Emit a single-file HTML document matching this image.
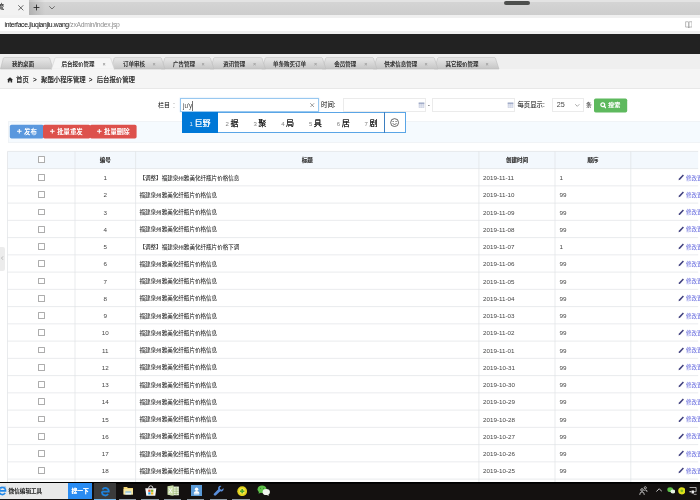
<!DOCTYPE html>
<html lang="zh-CN">
<head>
<meta charset="utf-8">
<title>后台报价管理</title>
<style>
html,body{margin:0;padding:0;background:#fff;}
body{width:700px;height:500px;overflow:hidden;}
#app{position:relative;width:700px;height:500px;overflow:hidden;background:#fff;font-family:"Liberation Sans","Noto Sans CJK SC",sans-serif;color:#333;font-size:5.47px;}
#app *{box-sizing:border-box;}
#layer{position:absolute;left:0;top:0;width:700px;height:500px;will-change:transform;text-shadow:0 0 0.5px;}
.abs{position:absolute;}
.t{position:absolute;white-space:nowrap;line-height:10px;height:10px;}
/* browser chrome */
.bstrip{left:0;top:0;width:700px;height:14.8px;background:linear-gradient(#e3e3e3 0,#e3e3e3 1.6px,#d4d4d4 2.4px,#cdcdcd 100%);}
.btab{left:0;top:0;width:28.6px;height:15px;background:#f2f2f2;}
.btool{left:0;top:14.8px;width:700px;height:19px;background:#f0f0f0;}
.baddr{left:0;top:17.6px;width:700px;height:13.6px;background:#fff;}
.pill{left:504px;top:1.2px;width:26.4px;height:3.9px;border-radius:2px;background:#4d4f4d;}
.black{left:0;top:33.7px;width:700px;height:20.4px;background:#222;}
/* app tabs */
.tabbar{left:0;top:54.1px;width:700px;height:16px;background:#efefef;}
.crumb{left:0;top:69.4px;width:700px;height:19.2px;background:#f5f5f5;border-bottom:1px solid #e8e8e8;}
.tabt{font-size:5.5px;color:#333;top:59px;}
.tabx{font-size:5.4px;color:#a4a4a4;top:59px;}
.cr{font-size:6.38px;color:#333;top:75px;}
/* form */
.lbl{font-size:6.38px;color:#333;top:100.2px;text-shadow:0 0 0.5px rgba(51,51,51,.4);}
.inp{position:absolute;top:98.3px;height:14px;border:1px solid #ebebeb;background:#fff;}
.inp.focus{border-color:#98c8f0;box-shadow:0 0 1.5px rgba(59,150,230,.32);}
.band{left:7.5px;top:121px;width:693px;height:21.6px;background:#f5fafe;border:1px solid #f0f3f6;border-right:0;}
.btn{position:absolute;top:124.7px;height:13.8px;border-radius:1.8px;color:#fff;font-size:6.38px;line-height:13.8px;white-space:nowrap;}
/* table */
.tr{position:absolute;left:0;width:700px;}
.tr.th{font-weight:bold;}
.c{position:absolute;top:0.3px;height:100%;display:flex;align-items:center;white-space:nowrap;font-size:5.56px;color:#333;overflow:hidden;}
.c1{left:7.5px;width:67.5px;justify-content:center;}
.c2{left:75px;width:60.6px;justify-content:center;font-size:6.25px;color:#444;text-shadow:none;}
.c3{left:135.6px;width:343.3px;padding-left:3.9px;text-shadow:0 0 0.5px rgba(51,51,51,.4);}
.c4{left:478.9px;width:76.1px;padding-left:4.1px;font-size:6.25px;color:#444;text-shadow:none;}
.c5{left:555px;width:75.8px;padding-left:4.5px;font-size:6.25px;color:#444;text-shadow:none;}
.c6{left:630.8px;width:80px;padding-left:47.4px;overflow:visible;color:#787ce2;text-shadow:0 0 0.5px rgba(120,124,226,.4);}
.th .c2,.th .c3,.th .c4,.th .c5{justify-content:center;padding-left:0;font-size:5.5px;color:#333;text-shadow:0 0 0.4px rgba(51,51,51,.5);}
.c6 a{color:#787ce2;margin-left:1.2px;}
.pen{width:6.6px;height:6.6px;flex:none;}
.cb{display:block;width:6.8px;height:6.8px;border:1px solid #adadad;border-radius:0.6px;background:#fff;}
.th .cb{margin-top:-1.4px;}
/* taskbar */
.task{left:0;top:481.6px;width:700px;height:18.4px;background:linear-gradient(#000 0,#000 1.4px,#141110 1.8px,#141110 100%);}
.ime{font-size:8.1px;color:#222;line-height:11px;height:11px;}
.ime b{font-weight:normal;font-size:6px;color:#808080;margin-right:1.5px;text-shadow:none;font-family:"Liberation Sans",sans-serif;}
.ime[style*="#fff"] b{color:#dfeaf6;}

</style>
</head>
<body>
<div id="app"><div id="layer">
<!-- browser chrome -->
<div class="abs bstrip"></div>
<div class="abs btab"></div>
<div class="abs" style="left:28.6px;top:0;width:16px;height:14.8px;background:linear-gradient(90deg,rgba(0,0,0,.14),rgba(0,0,0,0))"></div>
<div class="abs pill"></div>
<span class="t" style="left:-2.6px;top:2.2px;font-size:6.6px;color:#444;">流</span>
<svg class="abs" style="left:18.1px;top:5.2px;width:5.6px;height:5.6px" viewBox="0 0 10 10"><path d="M0.5 0.5 L9.5 9.5 M9.5 0.5 L0.5 9.5" stroke="#333" stroke-width="1.3" fill="none"/></svg>
<svg class="abs" style="left:33px;top:4px;width:7px;height:7px" viewBox="0 0 7 7"><path d="M3.5 0.6 V6.4 M0.6 3.5 H6.4" stroke="#222" stroke-width="0.85" fill="none"/></svg>
<svg class="abs" style="left:48.6px;top:6.2px;width:6px;height:3.6px" viewBox="0 0 10 6"><path d="M0.5 0.5 L5 5 L9.5 0.5" stroke="#444" stroke-width="1.2" fill="none"/></svg>
<div class="abs btool"></div>
<div class="abs baddr"></div>
<span class="t" style="left:4.5px;top:19.6px;font-size:6.8px;color:#222;letter-spacing:-0.33px;text-shadow:0 0 0.4px rgba(34,34,34,.2)" id="url">interface.jiuqianjiu.wang<span style="color:#8e8e8e;text-shadow:none">/zxAdmin/index.jsp</span></span>
<svg class="abs" style="left:684.6px;top:20.8px;width:7.6px;height:7.4px" viewBox="0 0 10 10"><path d="M0.7 1 H4 Q5 1 5 2.2 V9.2 Q5 8.2 4 8.2 H0.7 Z M9.3 1 H6 Q5 1 5 2.2 V9.2 Q5 8.2 6 8.2 H9.3 Z" stroke="#9a9a9a" stroke-width="0.9" fill="none"/></svg>
<div class="abs black"></div>
<!-- app tab bar -->
<div class="abs tabbar"></div>
<div class="abs crumb"></div>
<svg class="abs" style="left:0;top:54px;width:700px;height:17px" viewBox="0 0.4 700 17">
<defs><linearGradient id="tg" x1="0" y1="0" x2="0" y2="1"><stop offset="0" stop-color="#e8e8e8"/><stop offset="1" stop-color="#c6c6c6"/></linearGradient></defs>
<g stroke="#bdbdbd" stroke-width="0.6" fill="url(#tg)">
<path d="M434.2 15.4 L437.8 4.6 Q438 4 438.8 4 H494.4 Q495.2 4 495.4 4.6 L499 15.4 Z"/>
<path d="M373.2 15.4 L376.8 4.6 Q377 4 377.8 4 H433.4 Q434.2 4 434.4 4.6 L438 15.4 Z"/>
<path d="M322.2 15.4 L325.8 4.6 Q326 4 326.8 4 H372.4 Q373.2 4 373.4 4.6 L377 15.4 Z"/>
<path d="M261.7 15.4 L265.3 4.6 Q265.5 4 266.3 4 H321.4 Q322.2 4 322.4 4.6 L326 15.4 Z"/>
<path d="M210.2 15.4 L213.8 4.6 Q214 4 214.8 4 H260.9 Q261.7 4 261.9 4.6 L265.5 15.4 Z"/>
<path d="M161.2 15.4 L164.8 4.6 Q165 4 165.8 4 H209.4 Q210.2 4 210.4 4.6 L214 15.4 Z"/>
<path d="M110.7 15.4 L114.3 4.6 Q114.5 4 115.3 4 H160.4 Q161.2 4 161.4 4.6 L165 15.4 Z"/>
<path d="M0.4 15.4 L3.4 4.6 Q3.6 4 4.4 4 H48.6 Q49.4 4 49.6 4.6 L53.2 15.4 Z"/>
</g>
<path d="M51.4 15.6 L55 4.6 Q55.2 4 56 4 H109.7 Q110.5 4 110.7 4.6 L114.3 15.6 Z" fill="#f5f5f5" stroke="#d2d2d2" stroke-width="0.6"/>
<rect x="52" y="15" width="61.8" height="1.6" fill="#f5f5f5"/>
</svg>
<span class="t tabt" style="left:12.1px">我的桌面</span>
<span class="t tabt" style="left:61.4px">后台报价管理</span><span class="t tabx" style="left:102.4px">×</span>
<span class="t tabt" style="left:122.9px">订单审核</span><span class="t tabx" style="left:152.5px">×</span>
<span class="t tabt" style="left:172.9px">广告管理</span><span class="t tabx" style="left:201.5px">×</span>
<span class="t tabt" style="left:223.2px">资讯管理</span><span class="t tabx" style="left:253px">×</span>
<span class="t tabt" style="left:273px">单条购买订单</span><span class="t tabx" style="left:314px">×</span>
<span class="t tabt" style="left:334.2px">会员管理</span><span class="t tabx" style="left:364.2px">×</span>
<span class="t tabt" style="left:384.2px">供求信息管理</span><span class="t tabx" style="left:424.5px">×</span>
<span class="t tabt" style="left:445.4px">其它报价管理</span><span class="t tabx" style="left:485.5px">×</span>
<!-- breadcrumb -->
<svg class="abs" style="left:7.4px;top:77px;width:6px;height:5.6px" viewBox="0 0 12 11"><path d="M6 0.3 L0 5.6 H1.7 V10.7 H4.8 V7.2 H7.2 V10.7 H10.3 V5.6 H12 Z" fill="#2a2a2a"/></svg>
<span class="t cr" style="left:16px">首页</span>
<span class="t cr" style="left:33px;font-family:'Liberation Sans',sans-serif">&gt;</span>
<span class="t cr" style="left:41.1px">聚酯小程序管理</span>
<span class="t cr" style="left:88.8px;font-family:'Liberation Sans',sans-serif">&gt;</span>
<span class="t cr" style="left:96.7px">后台报价管理</span>
<!-- search form -->
<div class="abs band"></div>
<span class="t lbl" style="left:158px;font-size:6px">栏目</span><span class="t lbl" style="left:172.4px;color:#ccc;font-size:6px">：</span>
<div class="inp focus" style="left:180.2px;width:139.2px"></div>
<span class="t" style="left:183px;top:101px;font-size:6.3px;color:#444;text-shadow:none;border-right:1px solid rgba(0,0,0,.55);padding-right:0.2px;height:9.6px;line-height:9.6px">ju'y</span>
<svg class="abs" style="left:310.2px;top:102.9px;width:4.4px;height:4.4px" viewBox="0 0 10 10"><path d="M0.5 0.5 L9.5 9.5 M9.5 0.5 L0.5 9.5" stroke="#555" stroke-width="1.3" fill="none"/></svg>
<span class="t lbl" style="left:321px">时间:</span>
<div class="inp" style="left:342.8px;width:83px"></div>
<svg class="abs cal" style="left:418px;top:102px;width:7px;height:6.2px" viewBox="0 0 10 10"><rect x="0.5" y="1" width="9" height="8.4" fill="#c9cfe0"/><rect x="0.5" y="1" width="9" height="2" fill="#9aa6c4"/><path d="M0.5 5 H9.5 M0.5 7.2 H9.5 M3.5 3 V9.4 M6.5 3 V9.4" stroke="#eef1f8" stroke-width="0.7"/></svg>
<span class="t lbl" style="left:427.8px;color:#555">-</span>
<div class="inp" style="left:431.8px;width:83.4px"></div>
<svg class="abs cal" style="left:507px;top:102px;width:7px;height:6.2px" viewBox="0 0 10 10"><rect x="0.5" y="1" width="9" height="8.4" fill="#c9cfe0"/><rect x="0.5" y="1" width="9" height="2" fill="#9aa6c4"/><path d="M0.5 5 H9.5 M0.5 7.2 H9.5 M3.5 3 V9.4 M6.5 3 V9.4" stroke="#eef1f8" stroke-width="0.7"/></svg>
<span class="t lbl" style="left:517.4px;font-size:6.38px">每页显示:</span>
<div class="inp" style="left:552.2px;width:31.6px"></div>
<span class="t lbl" style="left:556.8px;font-size:7.2px;color:#444;text-shadow:none">25</span>
<svg class="abs" style="left:575.4px;top:104px;width:4.6px;height:2.8px" viewBox="0 0 10 6"><path d="M0.5 0.5 L5 5 L9.5 0.5" stroke="#666" stroke-width="1.2" fill="none"/></svg>
<span class="t lbl" style="left:586px;font-size:5.8px">条</span>
<svg class="abs" style="left:0;top:90px;width:700px;height:60px" viewBox="0 90 700 60"><rect x="594" y="98.5" width="33.2" height="13.9" rx="1.7" fill="#5eb95e"/><rect x="9.8" y="124.7" width="34" height="13.7" rx="1.7" fill="#5a98de"/><rect x="43" y="124.7" width="47.4" height="13.7" rx="1.7" fill="#dd514c"/><rect x="89.8" y="124.7" width="46.8" height="13.7" rx="1.7" fill="#dd514c"/></svg>
<svg class="abs" style="left:599.8px;top:102.2px;width:6.6px;height:6.6px" viewBox="0 0 10 10"><circle cx="4.2" cy="4.2" r="2.9" stroke="#fff" stroke-width="1.9" fill="none"/><path d="M6.4 6.4 L9.2 9.2" stroke="#fff" stroke-width="2.1"/></svg>
<span class="t" style="left:608px;top:100.3px;font-size:6.2px;color:#fff">搜索</span>
<!-- toolbar band -->
<svg class="abs" style="left:17.2px;top:129.4px;width:4.6px;height:4.6px" viewBox="0 0 10 10"><path d="M5 0 V10 M0 5 H10" stroke="#fff" stroke-width="2.2" fill="none"/></svg>
<span class="t" style="left:24px;top:126.6px;font-size:6.38px;color:#fff">发布</span>
<svg class="abs" style="left:50.3px;top:129.4px;width:4.6px;height:4.6px" viewBox="0 0 10 10"><path d="M5 0 V10 M0 5 H10" stroke="#fff" stroke-width="2.2" fill="none"/></svg>
<span class="t" style="left:57.2px;top:126.6px;font-size:6.38px;color:#fff">批量重发</span>
<svg class="abs" style="left:97px;top:129.4px;width:4.6px;height:4.6px" viewBox="0 0 10 10"><path d="M5 0 V10 M0 5 H10" stroke="#fff" stroke-width="2.2" fill="none"/></svg>
<span class="t" style="left:104px;top:126.6px;font-size:6.38px;color:#fff">批量删除</span>
<!-- collapse handle -->
<div class="abs" style="left:0;top:246.6px;width:5.2px;height:24px;background:#ececec;border-radius:0 2px 2px 0"></div>
<svg class="abs" style="left:1.4px;top:256.4px;width:2.4px;height:4.2px" viewBox="0 0 6 10"><path d="M5 0.8 L1.2 5 L5 9.2" stroke="#999" stroke-width="1.5" fill="none"/></svg>

<svg class="abs" style="left:0;top:0;width:700px;height:482px" viewBox="0 0 700 482">
<rect x="7.5" y="151.4" width="690.7" height="17.2" fill="#f3f8fd"/>
<g stroke="#dfe2e5" stroke-width="0.7" fill="none">
<path d="M7.5 151.40 H698.2"/>
<path d="M7.5 168.60 H698.2"/>
<path d="M7.5 185.85 H698.2"/>
<path d="M7.5 203.10 H698.2"/>
<path d="M7.5 220.35 H698.2"/>
<path d="M7.5 237.60 H698.2"/>
<path d="M7.5 254.85 H698.2"/>
<path d="M7.5 272.10 H698.2"/>
<path d="M7.5 289.35 H698.2"/>
<path d="M7.5 306.60 H698.2"/>
<path d="M7.5 323.85 H698.2"/>
<path d="M7.5 341.10 H698.2"/>
<path d="M7.5 358.35 H698.2"/>
<path d="M7.5 375.60 H698.2"/>
<path d="M7.5 392.85 H698.2"/>
<path d="M7.5 410.10 H698.2"/>
<path d="M7.5 427.35 H698.2"/>
<path d="M7.5 444.60 H698.2"/>
<path d="M7.5 461.85 H698.2"/>
<path d="M7.5 479.10 H698.2"/>
<path d="M7.50 151.4 V482"/>
<path d="M75.00 151.4 V482"/>
<path d="M135.60 151.4 V482"/>
<path d="M478.90 151.4 V482"/>
<path d="M555.00 151.4 V482"/>
<path d="M630.80 151.4 V482"/>
</g></svg>
<div class="tr th" style="top:151.40px;height:17.20px"><span class="c c1"><i class="cb"></i></span><span class="c c2">编号</span><span class="c c3">标题</span><span class="c c4">创建时间</span><span class="c c5">顺序</span><span class="c c6"></span></div>
<div class="tr " style="top:168.60px;height:17.25px"><span class="c c1"><i class="cb"></i></span><span class="c c2">1</span><span class="c c3">【调整】福建泉州雅美化纤瓶片价格信息</span><span class="c c4">2019-11-11</span><span class="c c5">1</span><span class="c c6"><svg class="pen" viewBox="0 0 10 10"><path d="M0.8 9.6 L1.5 7 L7.4 0.8 L9 2.4 L3.2 8.8 Z" fill="#40407e"/></svg><a>修改置顶</a></span></div>
<div class="tr " style="top:185.85px;height:17.25px"><span class="c c1"><i class="cb"></i></span><span class="c c2">2</span><span class="c c3">福建泉州雅美化纤瓶片价格信息</span><span class="c c4">2019-11-10</span><span class="c c5">99</span><span class="c c6"><svg class="pen" viewBox="0 0 10 10"><path d="M0.8 9.6 L1.5 7 L7.4 0.8 L9 2.4 L3.2 8.8 Z" fill="#40407e"/></svg><a>修改置顶</a></span></div>
<div class="tr " style="top:203.10px;height:17.25px"><span class="c c1"><i class="cb"></i></span><span class="c c2">3</span><span class="c c3">福建泉州雅美化纤瓶片价格信息</span><span class="c c4">2019-11-09</span><span class="c c5">99</span><span class="c c6"><svg class="pen" viewBox="0 0 10 10"><path d="M0.8 9.6 L1.5 7 L7.4 0.8 L9 2.4 L3.2 8.8 Z" fill="#40407e"/></svg><a>修改置顶</a></span></div>
<div class="tr " style="top:220.35px;height:17.25px"><span class="c c1"><i class="cb"></i></span><span class="c c2">4</span><span class="c c3">福建泉州雅美化纤瓶片价格信息</span><span class="c c4">2019-11-08</span><span class="c c5">99</span><span class="c c6"><svg class="pen" viewBox="0 0 10 10"><path d="M0.8 9.6 L1.5 7 L7.4 0.8 L9 2.4 L3.2 8.8 Z" fill="#40407e"/></svg><a>修改置顶</a></span></div>
<div class="tr " style="top:237.60px;height:17.25px"><span class="c c1"><i class="cb"></i></span><span class="c c2">5</span><span class="c c3">【调整】福建泉州雅美化纤瓶片价格下调</span><span class="c c4">2019-11-07</span><span class="c c5">1</span><span class="c c6"><svg class="pen" viewBox="0 0 10 10"><path d="M0.8 9.6 L1.5 7 L7.4 0.8 L9 2.4 L3.2 8.8 Z" fill="#40407e"/></svg><a>修改置顶</a></span></div>
<div class="tr " style="top:254.85px;height:17.25px"><span class="c c1"><i class="cb"></i></span><span class="c c2">6</span><span class="c c3">福建泉州雅美化纤瓶片价格信息</span><span class="c c4">2019-11-06</span><span class="c c5">99</span><span class="c c6"><svg class="pen" viewBox="0 0 10 10"><path d="M0.8 9.6 L1.5 7 L7.4 0.8 L9 2.4 L3.2 8.8 Z" fill="#40407e"/></svg><a>修改置顶</a></span></div>
<div class="tr " style="top:272.10px;height:17.25px"><span class="c c1"><i class="cb"></i></span><span class="c c2">7</span><span class="c c3">福建泉州雅美化纤瓶片价格信息</span><span class="c c4">2019-11-05</span><span class="c c5">99</span><span class="c c6"><svg class="pen" viewBox="0 0 10 10"><path d="M0.8 9.6 L1.5 7 L7.4 0.8 L9 2.4 L3.2 8.8 Z" fill="#40407e"/></svg><a>修改置顶</a></span></div>
<div class="tr " style="top:289.35px;height:17.25px"><span class="c c1"><i class="cb"></i></span><span class="c c2">8</span><span class="c c3">福建泉州雅美化纤瓶片价格信息</span><span class="c c4">2019-11-04</span><span class="c c5">99</span><span class="c c6"><svg class="pen" viewBox="0 0 10 10"><path d="M0.8 9.6 L1.5 7 L7.4 0.8 L9 2.4 L3.2 8.8 Z" fill="#40407e"/></svg><a>修改置顶</a></span></div>
<div class="tr " style="top:306.60px;height:17.25px"><span class="c c1"><i class="cb"></i></span><span class="c c2">9</span><span class="c c3">福建泉州雅美化纤瓶片价格信息</span><span class="c c4">2019-11-03</span><span class="c c5">99</span><span class="c c6"><svg class="pen" viewBox="0 0 10 10"><path d="M0.8 9.6 L1.5 7 L7.4 0.8 L9 2.4 L3.2 8.8 Z" fill="#40407e"/></svg><a>修改置顶</a></span></div>
<div class="tr " style="top:323.85px;height:17.25px"><span class="c c1"><i class="cb"></i></span><span class="c c2">10</span><span class="c c3">福建泉州雅美化纤瓶片价格信息</span><span class="c c4">2019-11-02</span><span class="c c5">99</span><span class="c c6"><svg class="pen" viewBox="0 0 10 10"><path d="M0.8 9.6 L1.5 7 L7.4 0.8 L9 2.4 L3.2 8.8 Z" fill="#40407e"/></svg><a>修改置顶</a></span></div>
<div class="tr " style="top:341.10px;height:17.25px"><span class="c c1"><i class="cb"></i></span><span class="c c2">11</span><span class="c c3">福建泉州雅美化纤瓶片价格信息</span><span class="c c4">2019-11-01</span><span class="c c5">99</span><span class="c c6"><svg class="pen" viewBox="0 0 10 10"><path d="M0.8 9.6 L1.5 7 L7.4 0.8 L9 2.4 L3.2 8.8 Z" fill="#40407e"/></svg><a>修改置顶</a></span></div>
<div class="tr " style="top:358.35px;height:17.25px"><span class="c c1"><i class="cb"></i></span><span class="c c2">12</span><span class="c c3">福建泉州雅美化纤瓶片价格信息</span><span class="c c4">2019-10-31</span><span class="c c5">99</span><span class="c c6"><svg class="pen" viewBox="0 0 10 10"><path d="M0.8 9.6 L1.5 7 L7.4 0.8 L9 2.4 L3.2 8.8 Z" fill="#40407e"/></svg><a>修改置顶</a></span></div>
<div class="tr " style="top:375.60px;height:17.25px"><span class="c c1"><i class="cb"></i></span><span class="c c2">13</span><span class="c c3">福建泉州雅美化纤瓶片价格信息</span><span class="c c4">2019-10-30</span><span class="c c5">99</span><span class="c c6"><svg class="pen" viewBox="0 0 10 10"><path d="M0.8 9.6 L1.5 7 L7.4 0.8 L9 2.4 L3.2 8.8 Z" fill="#40407e"/></svg><a>修改置顶</a></span></div>
<div class="tr " style="top:392.85px;height:17.25px"><span class="c c1"><i class="cb"></i></span><span class="c c2">14</span><span class="c c3">福建泉州雅美化纤瓶片价格信息</span><span class="c c4">2019-10-29</span><span class="c c5">99</span><span class="c c6"><svg class="pen" viewBox="0 0 10 10"><path d="M0.8 9.6 L1.5 7 L7.4 0.8 L9 2.4 L3.2 8.8 Z" fill="#40407e"/></svg><a>修改置顶</a></span></div>
<div class="tr " style="top:410.10px;height:17.25px"><span class="c c1"><i class="cb"></i></span><span class="c c2">15</span><span class="c c3">福建泉州雅美化纤瓶片价格信息</span><span class="c c4">2019-10-28</span><span class="c c5">99</span><span class="c c6"><svg class="pen" viewBox="0 0 10 10"><path d="M0.8 9.6 L1.5 7 L7.4 0.8 L9 2.4 L3.2 8.8 Z" fill="#40407e"/></svg><a>修改置顶</a></span></div>
<div class="tr " style="top:427.35px;height:17.25px"><span class="c c1"><i class="cb"></i></span><span class="c c2">16</span><span class="c c3">福建泉州雅美化纤瓶片价格信息</span><span class="c c4">2019-10-27</span><span class="c c5">99</span><span class="c c6"><svg class="pen" viewBox="0 0 10 10"><path d="M0.8 9.6 L1.5 7 L7.4 0.8 L9 2.4 L3.2 8.8 Z" fill="#40407e"/></svg><a>修改置顶</a></span></div>
<div class="tr " style="top:444.60px;height:17.25px"><span class="c c1"><i class="cb"></i></span><span class="c c2">17</span><span class="c c3">福建泉州雅美化纤瓶片价格信息</span><span class="c c4">2019-10-26</span><span class="c c5">99</span><span class="c c6"><svg class="pen" viewBox="0 0 10 10"><path d="M0.8 9.6 L1.5 7 L7.4 0.8 L9 2.4 L3.2 8.8 Z" fill="#40407e"/></svg><a>修改置顶</a></span></div>
<div class="tr " style="top:461.85px;height:17.25px"><span class="c c1"><i class="cb"></i></span><span class="c c2">18</span><span class="c c3">福建泉州雅美化纤瓶片价格信息</span><span class="c c4">2019-10-25</span><span class="c c5">99</span><span class="c c6"><svg class="pen" viewBox="0 0 10 10"><path d="M0.8 9.6 L1.5 7 L7.4 0.8 L9 2.4 L3.2 8.8 Z" fill="#40407e"/></svg><a>修改置顶</a></span></div>
<!-- IME candidate popup -->
<div class="abs" style="left:181.6px;top:112.4px;width:224.2px;height:20.6px;background:#fff;border:1px solid #5aa5e6;"></div>
<div class="abs" style="left:181.6px;top:112.4px;width:36.6px;height:20.6px;background:#0078d7;"></div>
<div class="abs" style="left:384px;top:112.4px;width:1px;height:20.6px;background:#3d7fc0;"></div>
<span class="t ime" style="left:189.6px;top:117.9px;color:#fff"><b>1</b>巨野</span>
<span class="t ime" style="left:225.6px;top:117.9px"><b>2</b>据</span>
<span class="t ime" style="left:253.4px;top:117.9px"><b>3</b>聚</span>
<span class="t ime" style="left:281.2px;top:117.9px"><b>4</b>局</span>
<span class="t ime" style="left:309.0px;top:117.9px"><b>5</b>具</span>
<span class="t ime" style="left:336.8px;top:117.9px"><b>6</b>居</span>
<span class="t ime" style="left:364.6px;top:117.9px"><b>7</b>剧</span>
<svg class="abs" style="left:390.4px;top:118.2px;width:9.2px;height:9.2px" viewBox="0 0 20 20"><circle cx="10" cy="10" r="8.6" stroke="#333" stroke-width="1.6" fill="none"/><circle cx="6.8" cy="7.6" r="1.3" fill="#333"/><circle cx="13.2" cy="7.6" r="1.3" fill="#333"/><path d="M5.6 12 Q10 16.4 14.4 12" stroke="#333" stroke-width="1.5" fill="none"/></svg>
<!-- taskbar -->
<div class="abs task"></div>
<div class="abs" style="left:0;top:483px;width:68px;height:15.6px;background:#e9e9e9;"></div>
<svg class="abs" style="left:-3.4px;top:485.4px;width:10.4px;height:10.8px" viewBox="0 0 20 20"><path d="M4.4 10.8 H16.4 A6.4 6.4 0 0 0 4.6 7 M3.8 10.4 A6.4 6.4 0 0 0 15.6 14.8" stroke="#2388e8" stroke-width="3.2" fill="none"/><path d="M17.6 4.6 Q15 1.4 8 6.4 Q1.6 12 2.6 17.4" stroke="#2388e8" stroke-width="1.2" fill="none"/></svg>
<span class="t" style="left:8.6px;top:485.8px;font-size:5.6px;color:#222">微信编辑工具</span>
<div class="abs" style="left:68px;top:483px;width:24.2px;height:15.6px;background:#2a8cf2;"></div>
<span class="t" style="left:71.4px;top:485.8px;font-size:5.8px;color:#fff;font-weight:bold">搜一下</span>
<div class="abs" style="left:94px;top:482.6px;width:22.4px;height:17.4px;background:#3b3b3b;"></div>
<div class="abs" style="left:94px;top:498.6px;width:22.4px;height:1.4px;background:#76b9ed;"></div>
<svg class="abs" style="left:99.8px;top:486px;width:10.6px;height:10.6px" viewBox="0 0 20 20"><path d="M4 10.6 H16.6 A6.6 6.6 0 0 0 4.6 6.4 M3.6 10.4 A6.6 6.6 0 0 0 15.4 15.2" stroke="#1e82dc" stroke-width="3.3" fill="none"/></svg>
<!-- running-app underlines -->
<div class="abs" style="left:118.6px;top:499px;width:17.4px;height:1px;background:#8f9aa3;"></div>
<div class="abs" style="left:141.4px;top:499px;width:17.4px;height:1px;background:#8f9aa3;"></div>
<div class="abs" style="left:164px;top:499px;width:17.4px;height:1px;background:#8f9aa3;"></div>
<div class="abs" style="left:187px;top:499px;width:17.4px;height:1px;background:#8f9aa3;"></div>
<div class="abs" style="left:209.6px;top:499px;width:17.4px;height:1px;background:#8f9aa3;"></div>
<div class="abs" style="left:232.4px;top:499px;width:17.4px;height:1px;background:#8f9aa3;"></div>
<!-- folder -->
<svg class="abs" style="left:122.6px;top:486px;width:10.6px;height:9.4px" viewBox="0 0 21 19"><path d="M1 2 H8 L9.6 4 H20 V17 H1 Z" fill="#f3d777"/><rect x="1" y="6" width="19" height="11" fill="#f8e7a0"/><rect x="4.6" y="10.6" width="11.8" height="6.4" fill="#8fc1d8"/><rect x="4.6" y="13.6" width="11.8" height="3.4" fill="#e8f2f4"/></svg>
<!-- store -->
<svg class="abs" style="left:143.6px;top:485px;width:13.6px;height:11.4px" viewBox="0 0 27 23"><path d="M9 7 Q9 1.6 13.5 1.6 Q18 1.6 18 7" stroke="#f4f4f4" stroke-width="1.8" fill="none"/><path d="M2.4 6.6 H24.6 L22.6 21.6 H4.4 Z" fill="#f7f7f7"/><rect x="8.4" y="9.4" width="4.6" height="4.4" fill="#e8502a"/><rect x="14" y="9.4" width="4.6" height="4.4" fill="#7db928"/><rect x="8.4" y="14.8" width="4.6" height="4.4" fill="#1ea0e6"/><rect x="14" y="14.8" width="4.6" height="4.4" fill="#f8b617"/></svg>
<!-- excel-like -->
<svg class="abs" style="left:167.2px;top:485px;width:12.4px;height:11px" viewBox="0 0 25 22"><rect x="7" y="3" width="17" height="17.6" fill="#e6efd8"/><path d="M7 8 H24 M7 12.6 H24 M7 17 H24 M13 3 V20.6 M18.6 3 V20.6" stroke="#8cab62" stroke-width="1"/><path d="M1 2.6 L13 0.6 V21.6 L1 19.6 Z" fill="#cbdeaa"/><path d="M4 6.4 L10 15.8 M10 6.4 L4 15.8" stroke="#fff" stroke-width="2"/></svg>
<!-- contacts blue square -->
<svg class="abs" style="left:191px;top:485px;width:11.2px;height:11.2px" viewBox="0 0 22 22"><rect width="22" height="22" fill="#5b9bd8"/><circle cx="11" cy="8.4" r="3.4" fill="#fff"/><path d="M5.4 17.4 Q5.4 11.6 11 11.6 Q16.6 11.6 16.6 17.4 Z" fill="#fff"/><rect x="6" y="18.4" width="10" height="1.4" fill="#d6e6f6"/></svg>
<!-- wrench -->
<svg class="abs" style="left:213px;top:485px;width:11.6px;height:11.4px" viewBox="0 0 23 23"><path d="M4 19 L12.4 10.6" stroke="#5a8fdb" stroke-width="5.4" stroke-linecap="round"/><path d="M21 6 L17.4 9.4 L14 8.8 L13.4 5.4 L16.8 2 Q12.4 0.8 10.4 4.6 Q9.4 7.4 10.8 9.6 L13.4 12.2 Q16 13.6 18.6 12.4 Q22.2 10.4 21 6 Z" fill="#5a8fdb"/></svg>
<!-- 360 -->
<svg class="abs" style="left:236.6px;top:485.6px;width:10.4px;height:10.4px" viewBox="0 0 22 22"><circle cx="11" cy="11" r="10.4" fill="#e3d21c"/><circle cx="11" cy="11" r="6.6" fill="#efe545"/><path d="M11 6.4 V15.6 M6.4 11 H15.6" stroke="#4aa52c" stroke-width="3.4"/></svg>
<!-- wechat -->
<svg class="abs" style="left:257.2px;top:485.4px;width:13.6px;height:11px" viewBox="0 0 27 22"><ellipse cx="10" cy="8.4" rx="9" ry="7.6" fill="#5fc14a"/><path d="M4 13 L3 17.6 L8 15 Z" fill="#5fc14a"/><ellipse cx="18.4" cy="14" rx="7.4" ry="6.2" fill="#f0f5ee"/><path d="M22 18.6 L24 21.6 L19 20 Z" fill="#f0f5ee"/><circle cx="7" cy="6.4" r="1" fill="#2c6a20"/><circle cx="13" cy="6.4" r="1" fill="#2c6a20"/></svg>
<!-- tray -->
<svg class="abs" style="left:638.6px;top:486px;width:9px;height:9.4px" viewBox="0 0 18 19"><circle cx="6" cy="8" r="2.6" stroke="#eee" stroke-width="1.5" fill="none"/><path d="M1.4 18 Q1.4 12 6 12 Q10.6 12 10.6 18" stroke="#eee" stroke-width="1.5" fill="none"/><circle cx="12.6" cy="3.6" r="2.2" stroke="#eee" stroke-width="1.4" fill="none"/><path d="M10.4 9 Q12.6 7 16 9.4 V12" stroke="#eee" stroke-width="1.4" fill="none"/></svg>
<svg class="abs" style="left:656px;top:488.4px;width:6.4px;height:4px" viewBox="0 0 10 6"><path d="M0.5 5.5 L5 1 L9.5 5.5" stroke="#eee" stroke-width="1.3" fill="none"/></svg>
<svg class="abs" style="left:666.6px;top:487.2px;width:8.6px;height:7px" viewBox="0 0 27 22"><ellipse cx="10" cy="8.4" rx="9" ry="7.6" fill="#5fc14a"/><ellipse cx="18.4" cy="14" rx="7.4" ry="6.2" fill="#e6f2e2"/></svg>
<svg class="abs" style="left:677.6px;top:487px;width:7.6px;height:7.6px" viewBox="0 0 22 22"><circle cx="11" cy="11" r="10.4" fill="#dfe01c"/><circle cx="11" cy="11" r="4" fill="#7cb820"/></svg>
<svg class="abs" style="left:688.6px;top:486.8px;width:8.6px;height:8px" viewBox="0 0 18 17"><path d="M1 1 H15 V10 H9 M5 10 H1 Z" stroke="#eee" stroke-width="1.5" fill="none"/><rect x="5.4" y="7.4" width="5" height="6.4" fill="#eee"/><path d="M10 15.6 H16" stroke="#eee" stroke-width="1.4"/></svg>

</div></div>
</body>
</html>
